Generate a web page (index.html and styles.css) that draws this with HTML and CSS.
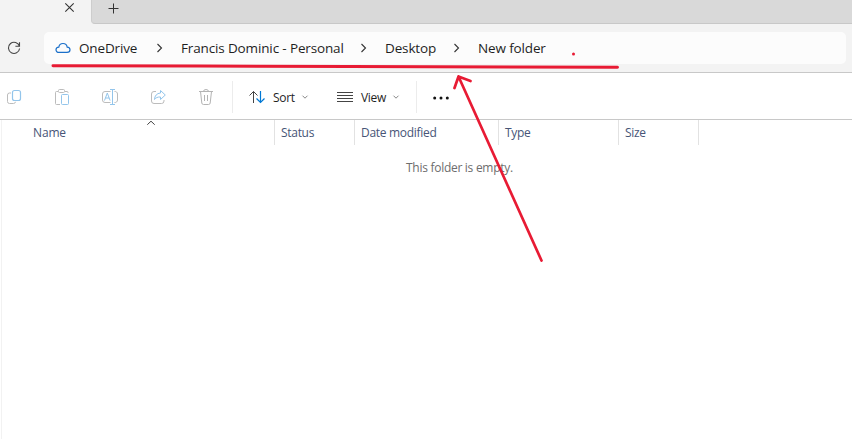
FILE: index.html
```html
<!DOCTYPE html>
<html lang="en">
<head>
<meta charset="utf-8">
<title>New folder</title>
<link rel="stylesheet" href="styles.css">
</head>
<body>
<div class="window">
  <header class="tabs">
    <div class="tab">
      <svg class="icon" viewBox="0 0 24 24"><path d="M8.300 3.300l8.400 8.400M16.700 3.300l-8.400 8.400" stroke="#333" stroke-width="1.100"/></svg>
    </div>
    <div class="tab-strip">
      <svg class="icon" viewBox="0 0 24 24"><path d="M11.500 3.500v10M6.500 8.500h10" stroke="#333"/></svg>
    </div>
  </header>
  <nav class="address-row">
    <svg class="icon refresh" viewBox="0 0 24 24"><path d="M17.400 10.200A5.600 5.600 0 1 0 17.600 12.500M17.500 6.200v4.100h-4.100" stroke="#444" stroke-width="1.100"/></svg>
    <div class="address">
      <svg class="cloud" viewBox="0 0 16 12"><path d="M4 10.400C2.200 10.400 1 9.400 1 7.800C1 6.300 2.100 5.200 3.800 5.100C4.200 2.800 5.800 1.500 8 1.500C10.200 1.500 11.800 2.800 12.200 5.100C13.900 5.200 15 6.300 15 7.800C15 9.400 13.800 10.400 12 10.400Z" stroke="#1a6fc9" stroke-width="1.200"/></svg>
      <span class="crumb c-drive">OneDrive</span>
      <svg class="chevron" viewBox="0 0 8 10"><path d="M2.500 1l4 4-4 4" stroke="#333" stroke-width="1.100"/></svg>
      <span class="crumb c-user">Francis Dominic - Personal</span>
      <svg class="chevron" viewBox="0 0 8 10"><path d="M2.500 1l4 4-4 4" stroke="#333" stroke-width="1.100"/></svg>
      <span class="crumb c-desktop">Desktop</span>
      <svg class="chevron" viewBox="0 0 8 10"><path d="M2.500 1l4 4-4 4" stroke="#333" stroke-width="1.100"/></svg>
      <span class="crumb c-folder">New folder</span>
    </div>
  </nav>
  <div class="toolbar">
    <div class="tools">
      <svg class="icon" viewBox="2 85 24 24"><path d="M11 93H9.500A2 2 0 0 0 7.500 95V101.500A2 2 0 0 0 9.500 103.500H13.500A2 2 0 0 0 15.500 101.800" stroke="#bcbcbc"/><rect x="12.500" y="90.500" width="8" height="10" rx="2" stroke="#93c5eb" stroke-width="1.200"/></svg>
      <svg class="icon" viewBox="50 85 24 24"><path d="M58 91.500H56.500A1 1 0 0 0 55.500 92.500V103.500A1 1 0 0 0 56.500 104.500H60M65 91.500H67A1 1 0 0 1 68 92.500V93" stroke="#bcbcbc"/><rect x="58.500" y="89.500" width="6" height="3" rx="1" stroke="#bcbcbc"/><rect x="61.500" y="94.500" width="7" height="10" rx="1" stroke="#93c5eb"/></svg>
      <svg class="icon" viewBox="98 85 24 24"><path d="M110.500 91.500H105A2.500 2.500 0 0 0 102.500 94V100A2.500 2.500 0 0 0 105 102.500H110.500M114.500 91.500A2.500 2.500 0 0 1 117.500 94V100A2.500 2.500 0 0 1 114.500 102.500" stroke="#bcbcbc"/><path d="M104.500 100.500l2.800-7.500 2.800 7.500M105.500 98h3.600M112.500 89.500v15M110 89.500h5M110 104.500h5" stroke="#93c5eb"/></svg>
      <svg class="icon" viewBox="146 85 24 24"><path d="M156 91.500H154A2.500 2.500 0 0 0 151.500 94V101A2.500 2.500 0 0 0 154 103.500H161.500A2.500 2.500 0 0 0 164 101V100" stroke="#bcbcbc"/><path d="M160.500 90.500L165.300 95L160.500 99.500V97C157.500 96.800 155.700 97.800 154.500 99.500C154.700 95.800 156.700 93.300 160.500 93Z" stroke="#93c5eb" stroke-linejoin="round"/></svg>
      <svg class="icon" viewBox="194 85 24 24"><path d="M199 91.500H213M203.500 91.500A2.500 2 0 0 1 208.500 91.500M200.500 91.500L201.800 103A1.700 1.700 0 0 0 203.500 104.500H208.500A1.700 1.700 0 0 0 210.200 103L211.500 91.500M204.500 95V101M207.500 95V101" stroke="#b4b4b4"/></svg>
    </div>
    <button class="menu sort">
      <svg class="icon" viewBox="249 85 24 24"><path d="M253.500 103V91.500M249.500 95.500L253.500 91.500L257.500 95.500" stroke="#444"/><path d="M260.500 91V102.500M256.500 98.500L260.500 102.500L264.500 98.500" stroke="#0078d4" stroke-width="1.200"/></svg>
      <span class="label">Sort</span>
      <svg class="caret" viewBox="0 0 8 6"><path d="M1.500 1.700L4 4.200L6.500 1.700" stroke="#888"/></svg>
    </button>
    <button class="menu view">
      <svg class="icon" viewBox="333 85 24 24"><path d="M337 92.500h16M337 95.500h16M337 98.500h16M337 101.500h16" stroke="#444"/></svg>
      <span class="label">View</span>
      <svg class="caret" viewBox="0 0 8 6"><path d="M1.500 1.700L4 4.200L6.500 1.700" stroke="#888"/></svg>
    </button>
    <button class="more"><svg class="icon" viewBox="429 85 24 24"><g fill="#111"><circle cx="434.700" cy="98" r="1.500"/><circle cx="441" cy="98" r="1.500"/><circle cx="447.300" cy="98" r="1.500"/></g></svg></button>
  </div>
  <main class="files">
    <div class="columns">
      <div class="column name"><span>Name</span>
        <svg class="sorted" viewBox="0 0 10 6"><path d="M1.300 4.700L5 1.200L8.700 4.700" stroke="#444"/></svg></div>
      <div class="column"><span>Status</span></div>
      <div class="column"><span>Date modified</span></div>
      <div class="column"><span>Type</span></div>
      <div class="column"><span>Size</span></div>
    </div>
    <p class="empty">This folder is empty.</p>
  </main>
  <svg class="annotation" viewBox="0 0 852 439">
    <path d="M53 65.700L200 66L350 66.500L617.500 67.200" stroke-width="3"/>
    <path d="M541.500 260.500L458.500 76.500M454.500 88L458.500 76.500L470.500 81" stroke-width="2.700"/>
    <circle cx="573.500" cy="54" r="1.500" fill="#e81b34" stroke="none"/>
  </svg>
</div>
</body>
</html>
```
FILE: styles.css
```css
* { box-sizing: border-box; }
body {
  margin: 0;
  font-family: "Open Sans", "Noto Sans", sans-serif;
  color: #1f1f1f;
}
svg { display: block; fill: none; flex: none; }
button { border: 0; padding: 0; background: none; font: inherit; color: inherit; text-align: left; }
.window {
  position: relative;
  width: 852px;
  height: 439px;
  overflow: hidden;
  display: flex;
  flex-direction: column;
  background: #fff;
}
.icon { width: 24px; height: 24px; }
.tabs { display: flex; height: 24px; background: #f3f3f3; }
.tab { width: 91px; padding-left: 57px; }
.tab-strip {
  flex: 1;
  padding-left: 10px;
  background: #d9d9d9;
  border-left: 1px solid #cdcdcd;
  border-bottom: 1px solid #c8c8c8;
  border-bottom-left-radius: 4px;
}
.address-row {
  display: flex;
  align-items: center;
  height: 49px;
  padding: 0 6px 0 2px;
  background: #f3f3f3;
  border-bottom: 1px solid #c8c8c8;
}
.address {
  flex: 1;
  display: flex;
  align-items: center;
  height: 32px;
  margin-left: 18px;
  padding-left: 11px;
  border-radius: 5px;
  background: #fcfcfc;
}
.cloud { width: 16px; height: 12px; margin-right: 8px; }
.crumb {
  font-size: 13.500px;
  line-height: 20px;
  letter-spacing: -0.140px;
  white-space: nowrap;
}
.chevron { width: 8px; height: 10px; margin-right: 18px; }
.c-drive { width: 76px; }
.c-user { width: 178px; }
.c-desktop { width: 67px; }
.toolbar {
  display: flex;
  align-items: center;
  height: 47px;
  padding: 2px 0 0 2px;
  border-bottom: 1px solid #c8c8c8;
}
.tools {
  display: flex;
  gap: 24px;
  width: 230px;
}
.menu, .more { display: flex; align-items: center; height: 32px; }
.sort { width: 101px; padding-left: 16px; border-left: 1px solid #ececec; }
.view { width: 83px; }
.label {
  padding-top: 1px;
  font-size: 12px;
  line-height: 18px;
  letter-spacing: -0.300px;
}
.sort .label { width: 28px; }
.view .label { width: 31px; margin-left: 4px; }
.caret { width: 8px; height: 6px; }
.more { border-left: 1px solid #ececec; padding-left: 12px; }
.files { flex: 1; margin-left: 1px; border-left: 1px solid #f2f2f2; }
.columns {
  display: grid;
  grid-template-columns: 273px 80px 144px 120px 80px;
  height: 25px;
}
.column {
  position: relative;
  padding: 3px 0 0 6px;
  border-right: 1px solid #e2e2e2;
  font-size: 12px;
  line-height: 20px;
  letter-spacing: -0.300px;
  color: #475577;
}
.name { padding-left: 31px; letter-spacing: -0.150px; }
.sorted { position: absolute; left: 144px; top: 0; width: 10px; height: 6px; }
.empty {
  margin: 13px 0 0 404px;
  font-size: 12px;
  line-height: 20px;
  letter-spacing: -0.280px;
  color: #6d6d6d;
}
.annotation {
  position: absolute;
  inset: 0;
  width: 852px;
  height: 439px;
  stroke: #e81b34;
  stroke-linecap: round;
  stroke-linejoin: round;
  pointer-events: none;
}
```
